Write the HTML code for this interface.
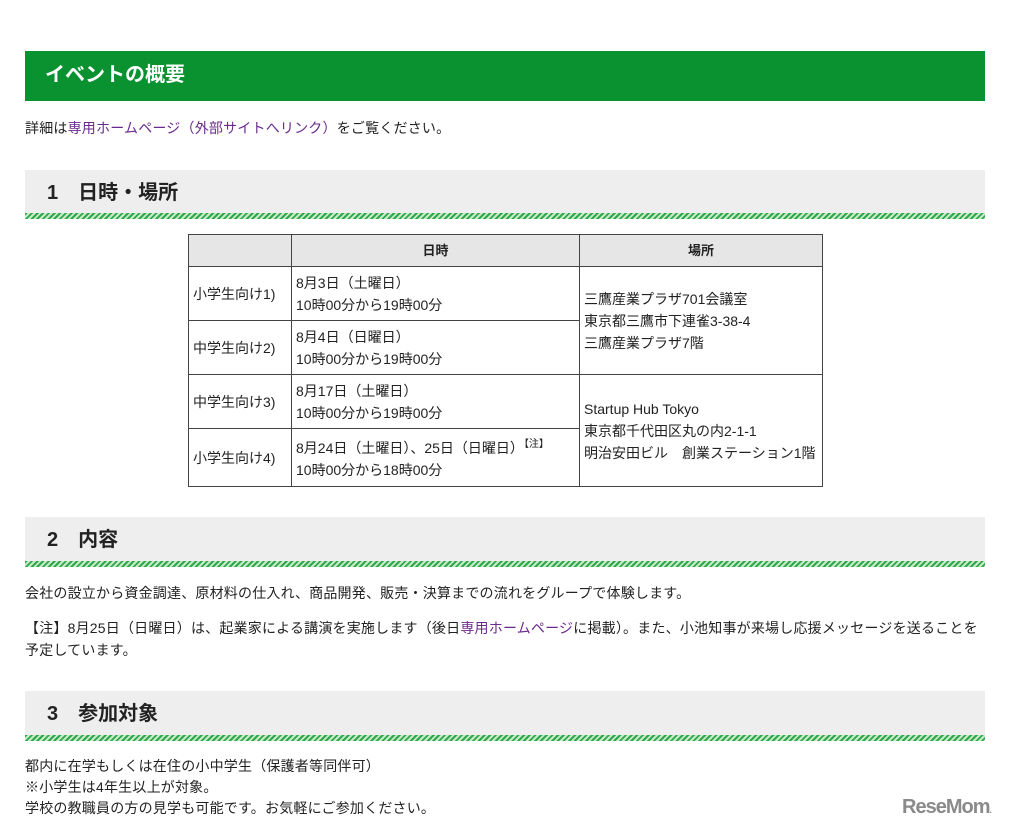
<!DOCTYPE html>
<html><head><meta charset="utf-8"><style>
body{margin:0;background:#fff;font-family:"Liberation Sans","Noto Sans CJK JP",sans-serif;color:#222;font-size:14px;}
.abs{position:absolute}
.gh{left:25px;top:51px;width:960px;height:50px;background:#09922f;color:#fff;font-weight:bold;font-size:20px;line-height:48px;}
.gh span{margin-left:20px}
.sh{left:25px;width:960px;height:44px;background:#eeeeee;font-weight:bold;font-size:20px;line-height:46px;}
.sh span{margin-left:22px}
.st{left:25px;width:960px;height:6px;background:repeating-linear-gradient(135deg,#2ea84a 0 2px,#c9eac9 2px 4px);}
a{color:#6a2a8c;text-decoration:none}
.t{position:absolute;white-space:nowrap;letter-spacing:0.2px}
table{position:absolute;left:188px;top:234px;border-collapse:collapse;font-size:14px}
td,th{border:1px solid #444;padding:0 4px;line-height:22px;vertical-align:middle;text-align:left}
th{background:#e6e6e6;height:31px;text-align:center;font-weight:bold;font-size:13px}
sup{font-size:10px;vertical-align:6px}
</style></head><body>
<div class="abs gh"><span>イベントの概要</span></div>
<div class="t" style="left:25px;top:118px">詳細は<a>専用ホームページ（外部サイトへリンク）</a>をご覧ください。</div>
<div class="abs sh" style="top:170px"><span>1　日時・場所</span></div>
<div class="abs st" style="top:213px"></div>
<table>
<tr><th style="width:94px"></th><th style="width:279px">日時</th><th style="width:234px">場所</th></tr>
<tr style="height:54px"><td>小学生向け1)</td><td>8月3日（土曜日）<br>10時00分から19時00分</td><td rowspan="2">三鷹産業プラザ701会議室<br>東京都三鷹市下連雀3-38-4<br>三鷹産業プラザ7階</td></tr>
<tr style="height:54px"><td>中学生向け2)</td><td>8月4日（日曜日）<br>10時00分から19時00分</td></tr>
<tr style="height:54px"><td>中学生向け3)</td><td>8月17日（土曜日）<br>10時00分から19時00分</td><td rowspan="2">Startup Hub Tokyo<br>東京都千代田区丸の内2-1-1<br>明治安田ビル　創業ステーション1階</td></tr>
<tr style="height:58px"><td>小学生向け4)</td><td>8月24日（土曜日）、25日（日曜日）<sup>【注】</sup><br>10時00分から18時00分</td></tr>
</table>
<div class="abs sh" style="top:517px"><span>2　内容</span></div>
<div class="abs st" style="top:561px"></div>
<div class="t" style="left:25px;top:583px">会社の設立から資金調達、原材料の仕入れ、商品開発、販売・決算までの流れをグループで体験します。</div>
<div class="t" style="left:25px;top:617px;line-height:22px">【注】8月25日（日曜日）は、起業家による講演を実施します（後日<a>専用ホームページ</a>に掲載）。また、小池知事が来場し応援メッセージを送ることを<br>予定しています。</div>
<div class="abs sh" style="top:691px"><span>3　参加対象</span></div>
<div class="abs st" style="top:735px"></div>
<div class="t" style="left:25px;top:756px;line-height:21px">都内に在学もしくは在住の小中学生（保護者等同伴可）<br>※小学生は4年生以上が対象。<br>学校の教職員の方の見学も可能です。お気軽にご参加ください。</div>
<div class="t" style="left:902px;top:796px;font-size:20px;font-weight:bold;color:#8a8a8a;letter-spacing:-1px">ReseMom<span style="font-size:8px">.</span></div>
</body></html>
